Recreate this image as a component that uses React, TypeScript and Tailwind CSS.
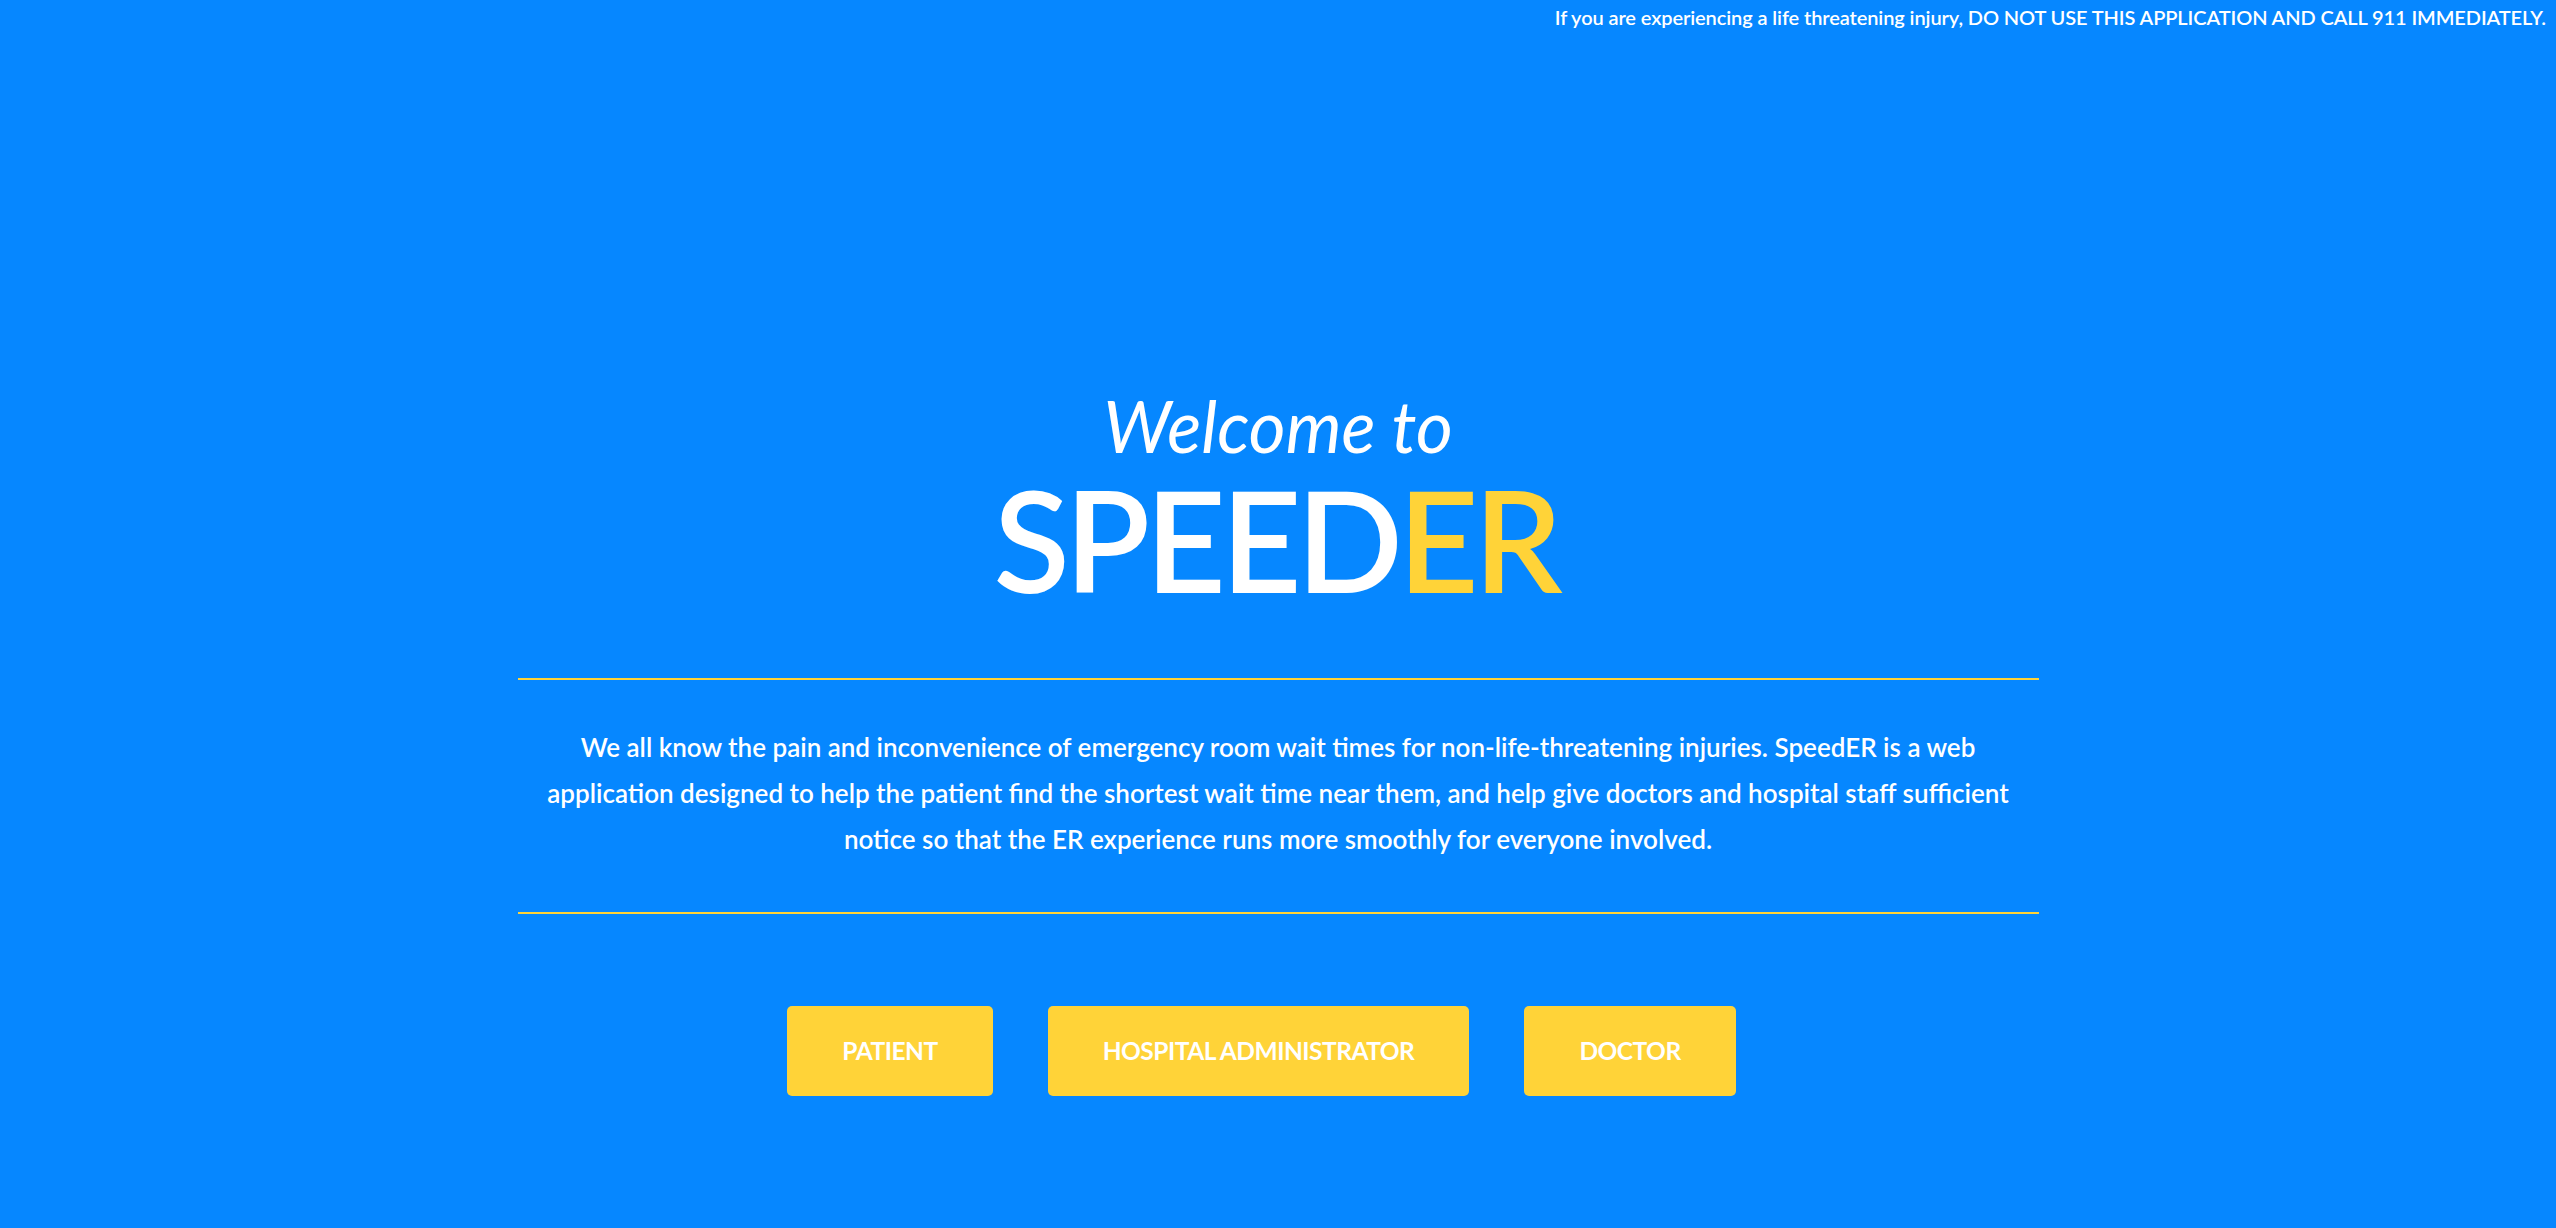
import React from "react";

export default function App() {
  return (
    <div className="min-h-screen w-full bg-[#0687FF] text-white" style={{ fontFamily: "Lato, 'Noto Sans', sans-serif" }}>
      <div className="flex justify-end pr-[10px] pt-[4px] text-[20px] font-semibold leading-[26px] tracking-[-0.1px]">
        If you are experiencing a life threatening injury, DO NOT USE THIS APPLICATION AND CALL 911 IMMEDIATELY.
      </div>
      <div className="flex flex-col items-center">
        <div className="mt-[360px] text-[71px] font-normal italic leading-none">Welcome to</div>
        <div className="mt-[8px] pr-[5px] text-[140px] font-semibold leading-none tracking-[-5px]">
          SPEED<span className="text-[#FFD338]">ER</span>
        </div>
        <div className="mt-[69px] h-[2px] w-[1521px] bg-[#FFD338]" />
        <p className="mt-[44px] w-[1480px] text-center text-[26px] font-semibold leading-[46px]">
          We all know the pain and inconvenience of emergency room wait times for non-life-threatening injuries. SpeedER is a web application designed to help the patient find the shortest wait time near them, and help give doctors and hospital staff sufficient notice so that the ER experience runs more smoothly for everyone involved.
        </p>
        <div className="mt-[50px] h-[2px] w-[1521px] bg-[#FFD338]" />
        <div className="mt-[92px] flex gap-[55px] pr-[33px]">
          {["PATIENT", "HOSPITAL ADMINISTRATOR", "DOCTOR"].map((t) => (
            <button
              key={t}
              className="flex h-[90px] items-center rounded-[5px] bg-[#FFD338] px-[55px] text-[24.5px] font-bold tracking-[-0.5px] text-white"
            >
              {t}
            </button>
          ))}
        </div>
      </div>
    </div>
  );
}
